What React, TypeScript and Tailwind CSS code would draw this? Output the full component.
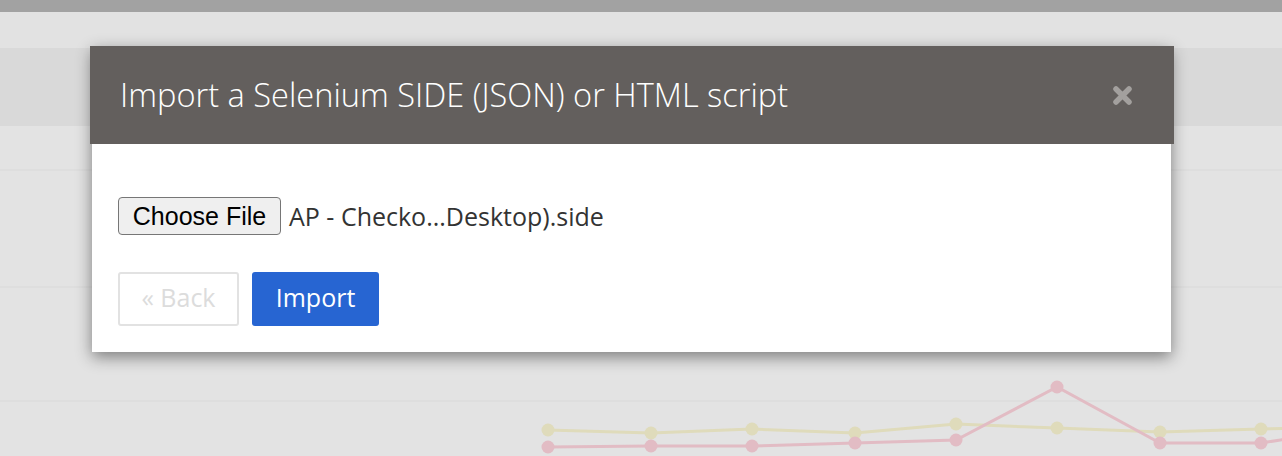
import React from 'react';

const yellow = [
  [548, 430], [651, 433], [752, 429], [855, 433], [956, 424], [1057, 428], [1160, 432], [1261, 429], [1300, 428],
];
const pink = [
  [548, 447], [651, 446], [752, 446], [855, 443], [956, 440], [1057, 387], [1160, 443], [1261, 443], [1300, 437],
];

const Chart = () => (
  <svg className="absolute left-0 top-0" width={1282} height={456} viewBox="0 0 1282 456">
    <polyline points={yellow.map((p) => p.join(',')).join(' ')} fill="none" stroke="#dfdbbb" strokeWidth={3} />
    <polyline points={pink.map((p) => p.join(',')).join(' ')} fill="none" stroke="#e2bcc4" strokeWidth={3} />
    {yellow.slice(0, 8).map(([x, y]) => (
      <circle key={`y${x}`} cx={x} cy={y} r={6.5} fill="#dfdbbb" />
    ))}
    {pink.slice(0, 8).map(([x, y]) => (
      <circle key={`p${x}`} cx={x} cy={y} r={6.5} fill="#e2bcc4" />
    ))}
  </svg>
);

const CloseIcon = () => (
  <svg width="21" height="21" viewBox="0 0 21 21">
    <path d="M4 4 L17 17 M17 4 L4 17" stroke="#a3a09e" strokeWidth={5.5} strokeLinecap="round" />
  </svg>
);

export default function App() {
  return (
    <div className="relative w-[1282px] h-[456px] overflow-hidden bg-[#e3e3e3] font-['Open_Sans',sans-serif]">
      {/* dimmed page behind the modal */}
      <div className="h-3 bg-[#a2a2a2]" />
      <div className="h-9 bg-[#e2e2e2]" />
      <div className="h-[78px] bg-[#d9d9d9]" />
      <div className="h-[45px] border-b-2 border-[#dedede]" />
      <div className="h-[117px] border-b-2 border-[#dedede]" />
      <div className="h-[114px] border-b-2 border-[#dedede]" />
      <Chart />

      {/* modal */}
      <div className="absolute left-[92px] top-[46px] w-[1079px] bg-white shadow-[0_5px_15px_rgba(0,0,0,0.45)]">
        <div className="-ml-[2px] -mr-[3px] h-[98px] bg-[#635f5d] flex items-center justify-between pl-[30px] pr-[41px]">
          <h3 className="text-white text-[32.6px] leading-none font-light">
            Import a Selenium SIDE (JSON) or HTML script
          </h3>
          <CloseIcon />
        </div>
        <div className="pt-[53px] px-[26px] pb-[26px]">
          <div className="flex items-center">
            <button className="w-[163px] h-[38px] bg-[#efefef] border border-[#767676] rounded-[4px] text-black text-[25px] leading-none font-['Liberation_Sans',Arial,sans-serif]">
              Choose File
            </button>
            <span className="ml-[8px] text-[25px] leading-none text-[#333]">AP - Checko...Desktop).side</span>
          </div>
          <div className="mt-[37px] flex gap-[13px]">
            <button className="w-[121px] h-[54px] pb-[3px] border-2 border-[#e2e2e2] rounded-[3px] text-[25px] text-[#dcdcdc]">
              « Back
            </button>
            <button className="w-[127px] h-[54px] pb-[3px] bg-[#2765d2] rounded-[3px] text-[25px] text-white">
              Import
            </button>
          </div>
        </div>
      </div>
    </div>
  );
}
